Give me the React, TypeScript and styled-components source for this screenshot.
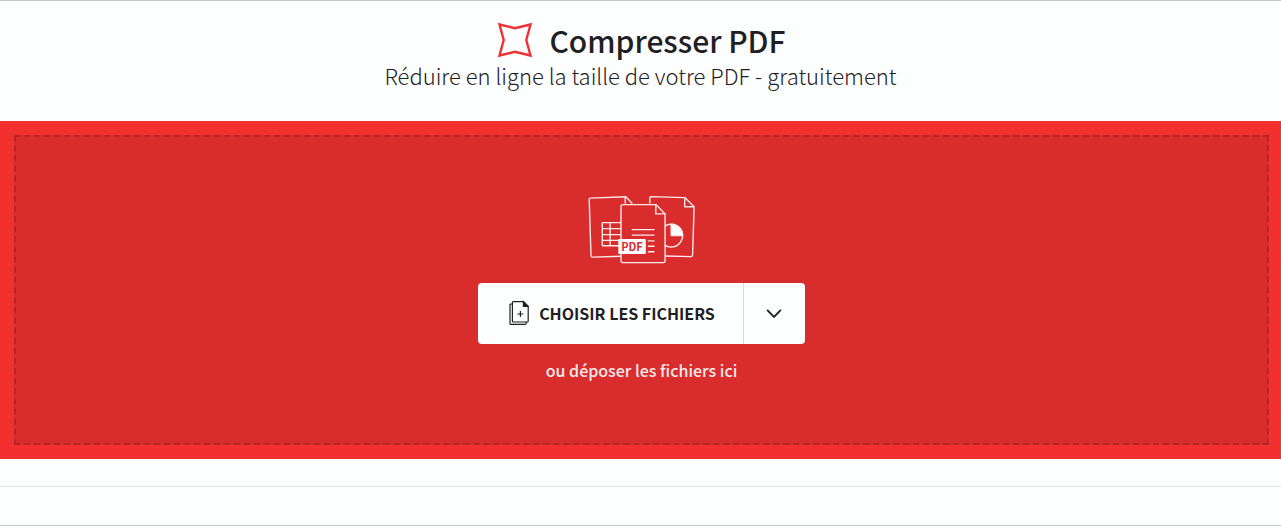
import React from "react";
import styled, { createGlobalStyle } from "styled-components";

const GlobalStyle = createGlobalStyle`
  *, *::before, *::after { box-sizing: border-box; }
  body {
    margin: 0;
    background: #fdfefe;
    color: #1f2023;
    font-family: "Noto Sans CJK JP", "Noto Sans", sans-serif;
  }
`;

const Page = styled.div`
  border-top: 1px solid #c8caca;
  border-bottom: 1px solid #c4c7c7;
`;

const Header = styled.header`
  display: flex;
  flex-direction: column;
  align-items: center;
  padding: 20px 16px 30px;
`;

const TitleRow = styled.div`
  display: flex;
  align-items: center;
  gap: 16px;
  padding-left: 2px;
`;

const Title = styled.h1`
  margin: 0;
  font-size: 30px;
  line-height: 38px;
  font-weight: 500;
`;

const Subtitle = styled.p`
  margin: 0;
  font-size: 22px;
  line-height: 32px;
  font-weight: 300;
`;

const Hero = styled.main`
  padding: 14px 12px 14px 14px;
  background: #f33030;
`;

const DropZone = styled.section`
  display: flex;
  flex-direction: column;
  align-items: center;
  padding: 58px 16px 61px;
  border: 2px dashed #b62424;
  background: #d92c2c;
`;

const ButtonGroup = styled.div`
  display: flex;
  height: 61px;
  margin-top: 18px;
  border-radius: 4px;
  overflow: hidden;
  background: #fdfefe;
`;

const Button = styled.button`
  display: flex;
  align-items: center;
  gap: 10px;
  border: 0;
  padding: 0 28px 2px 31px;
  background: transparent;
  color: #1f2023;
  font: inherit;
  font-size: 16px;
  font-weight: 700;
  line-height: 24px;
  text-transform: uppercase;
  cursor: pointer;
`;

const MenuButton = styled(Button)`
  justify-content: center;
  width: 62px;
  padding: 0;
  border-left: 1px solid #d9dadb;
`;

const Hint = styled.p`
  margin: 14px 0 0;
  color: #fdeaea;
  font-size: 16px;
  line-height: 24px;
  font-weight: 500;
`;

const Footer = styled.footer`
  padding-top: 27px;

  &::after {
    content: "";
    display: block;
    height: 39px;
    border-top: 1px solid #e4e5e6;
  }
`;

const IconText = styled.text`
  font-family: "Noto Sans CJK JP", "Noto Sans", sans-serif;
  font-size: 11px;
  font-weight: 700;
`;

function CompressIcon() {
  return (
    <svg width="36" height="36" viewBox="0 0 36 36" fill="none" aria-hidden="true">
      <path
        d="M2.5 2.5 18 6.2 33.5 2.5 29.3 18 33.5 33.5 18 29.8 2.5 33.5 6.7 18Z"
        stroke="#ee3134"
        strokeWidth="2.4"
      />
    </svg>
  );
}

function DocumentsArt() {
  return (
    <svg width="108" height="70" viewBox="0.7 0.4 108 70" fill="none" stroke="#fbe9e9" strokeWidth="1.4" strokeLinejoin="round" aria-hidden="true">
      <path d="M34 61.7 5.5 62.5Q3.8 62.6 3.7 60.9L1.9 5Q1.8 3.6 3.3 3.5L38.5 2.2 45 9" />
      <path d="M37.9 2.3V9" />
      <path d="M15 28H34M15 34H34M15 40H34M15 45.8H34M15 51.2H34M15 28V51.2M22.8 28V51.2" />
      <path d="M62.5 9V3.5Q62.5 2 64 2L97.5 3 106.8 12.2 105.3 60.5Q105.2 62 103.5 62L78 61.4" />
      <path d="M97.5 3 97.3 12.2H106.8" />
      <circle cx="83.9" cy="41" r="11.4" />
      <path d="M83.9 41V29.6A11.4 11.4 0 0 1 95.3 41Z" fill="#fdfefe" />
      <path d="M35.5 10H68.5L77.8 19.3V66Q77.8 68 76 68H35.5Q33.7 68 33.7 66V12Q33.7 10 35.5 10Z" fill="#d92c2c" />
      <path d="M68.5 10V19.3H77.8" />
      <path d="M44.5 35H67.2M44.5 40.5H67.2M60.5 46.3H67.2M60.5 51.7H67.2M60.5 57.2H67.2" />
      <rect x="31" y="44.4" width="27.5" height="15" rx="1" fill="#fdfefe" stroke="none" />
      <IconText x="44.7" y="56" textAnchor="middle" fill="#d92c2c" stroke="none">PDF</IconText>
    </svg>
  );
}

function AddFileIcon() {
  return (
    <svg width="20" height="26" viewBox="0 0 20 26" fill="none" stroke="#1f2023" strokeWidth="1.2" aria-hidden="true">
      <path d="M3.4 4H2Q1 4 1 5V23.5Q1 24.4 2 24.4H16Q17.2 24.4 17.2 23.3V22" />
      <path d="M4.4 1.6H14.4L19.2 6.4V21Q19.2 22 18.2 22H4.4Q3.4 22 3.4 21V2.6Q3.4 1.6 4.4 1.6Z" />
      <path d="M14.4 1.6V6.4H19.2Z" fill="#1f2023" />
      <path d="M11.4 11V17M8.4 14H14.4" />
    </svg>
  );
}

function ChevronIcon() {
  return (
    <svg width="16" height="10" viewBox="0 0 16 10" fill="none" aria-hidden="true">
      <path d="M1.6 1.4 8 7.8 14.4 1.4" stroke="#1f2023" strokeWidth="1.9" strokeLinecap="round" />
    </svg>
  );
}

export default function App() {
  return (
    <>
      <GlobalStyle />
      <Page>
        <Header>
          <TitleRow>
            <CompressIcon />
            <Title>Compresser PDF</Title>
          </TitleRow>
          <Subtitle>Réduire en ligne la taille de votre PDF - gratuitement</Subtitle>
        </Header>
        <Hero>
          <DropZone>
            <DocumentsArt />
            <ButtonGroup>
              <Button type="button">
                <AddFileIcon />
                Choisir les fichiers
              </Button>
              <MenuButton type="button" aria-label="Autres sources">
                <ChevronIcon />
              </MenuButton>
            </ButtonGroup>
            <Hint>ou déposer les fichiers ici</Hint>
          </DropZone>
        </Hero>
        <Footer />
      </Page>
    </>
  );
}
